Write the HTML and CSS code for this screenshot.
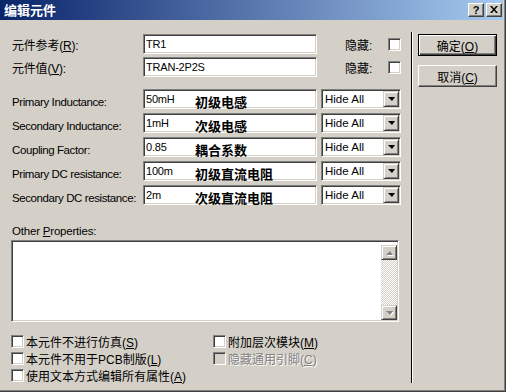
FILE: index.html
```html
<!DOCTYPE html>
<html>
<head>
<meta charset="utf-8">
<link rel="stylesheet" href="styles.css">
</head>
<body>
<div class="window">
  <div class="titlebar">
    <span class="title">编辑元件</span>
    <div class="tbtns">
      <span class="tbtn help">?</span>
      <span class="tbtn close"><svg width="8" height="7" viewBox="0 0 8 7"><path d="M0 0h2l2 2.5L6 0h2L5 3.5 8 7H6L4 4.5 2 7H0l3-3.5z" fill="#000"/></svg></span>
    </div>
  </div>
  <div class="content">
    <div class="left">
      <div class="toprows">
        <div class="row">
          <span class="lbl cjk">元件参考(<u>R</u>):</span>
          <div class="field"><span class="val">TR1</span></div>
          <span class="hide-lbl cjk">隐藏:</span>
          <span class="chk"></span>
        </div>
        <div class="row">
          <span class="lbl cjk">元件值(<u>V</u>):</span>
          <div class="field"><span class="val">TRAN-2P2S</span></div>
          <span class="hide-lbl cjk">隐藏:</span>
          <span class="chk"></span>
        </div>
      </div>
      <div class="props">
        <div class="row">
          <span class="lbl plbl">Primary Inductance:</span>
          <div class="field"><span class="val short">50mH</span><b class="note">初级电感</b></div>
          <div class="select"><span>Hide All</span><span class="dd"><i class="tri"></i></span></div>
        </div>
        <div class="row">
          <span class="lbl plbl">Secondary Inductance:</span>
          <div class="field"><span class="val short">1mH</span><b class="note">次级电感</b></div>
          <div class="select"><span>Hide All</span><span class="dd"><i class="tri"></i></span></div>
        </div>
        <div class="row">
          <span class="lbl plbl">Coupling Factor:</span>
          <div class="field"><span class="val short">0.85</span><b class="note">耦合系数</b></div>
          <div class="select"><span>Hide All</span><span class="dd"><i class="tri"></i></span></div>
        </div>
        <div class="row">
          <span class="lbl plbl">Primary DC resistance:</span>
          <div class="field"><span class="val short">100m</span><b class="note">初级直流电阻</b></div>
          <div class="select"><span>Hide All</span><span class="dd"><i class="tri"></i></span></div>
        </div>
        <div class="row">
          <span class="lbl plbl">Secondary DC resistance:</span>
          <div class="field"><span class="val short">2m</span><b class="note">次级直流电阻</b></div>
          <div class="select"><span>Hide All</span><span class="dd"><i class="tri"></i></span></div>
        </div>
      </div>
      <div class="other-lbl">Other <u>P</u>roperties:</div>
      <div class="memo">
        <div class="vscroll">
          <span class="sbtn"><i class="tri up"></i></span>
          <span class="track"></span>
          <span class="sbtn"><i class="tri dis"></i></span>
        </div>
      </div>
      <div class="checks">
        <div class="citem"><span class="chk"></span><span class="cjk">本元件不进行仿真(<u>S</u>)</span></div>
        <div class="citem"><span class="chk"></span><span class="cjk">附加层次模块(<u>M</u>)</span></div>
        <div class="citem"><span class="chk"></span><span class="cjk">本元件不用于PCB制版(<u>L</u>)</span></div>
        <div class="citem disabled"><span class="chk"></span><span class="cjk">隐藏通用引脚(<u>C</u>)</span></div>
        <div class="citem"><span class="chk"></span><span class="cjk">使用文本方式编辑所有属性(<u>A</u>)</span></div>
      </div>
    </div>
    <div class="sep"></div>
    <div class="right">
      <div class="btn default"><span>确定(<u>O</u>)</span></div>
      <div class="btn"><span>取消(<u>C</u>)</span></div>
    </div>
  </div>
</div>
</body>
</html>
```

FILE: styles.css
```css
* { box-sizing: border-box; }
html, body { margin: 0; padding: 0; }
body {
  width: 506px; height: 392px; overflow: hidden;
  background: #d4d0c8;
  font-family: "Liberation Sans", "Noto Sans CJK SC", sans-serif;
  font-size: 11px; color: #000;
}
u { text-decoration: underline; text-underline-offset: 1px; }
.cjk { font-size: 12px; letter-spacing: 0; }

.window {
  width: 506px; height: 392px;
  border-right: 1px solid #404040; border-bottom: 1px solid #404040;
  box-shadow: inset -1px -1px #808080;
  padding: 0 2px 2px 0;
  display: flex; flex-direction: column;
}
.titlebar {
  height: 20px; flex: none;
  background: linear-gradient(to right, #0a246a, #a6caf0);
  display: flex; align-items: center; justify-content: space-between;
  padding: 0 1px 0 4px;
}
.title { color: #fff; font: bold 13px "Noto Sans CJK SC", sans-serif; line-height: 20px; }
.tbtns { display: flex; gap: 2px; }
.tbtn {
  width: 16px; height: 14px; background: #d4d0c8;
  border-top: 1px solid #fff; border-left: 1px solid #fff;
  border-right: 1px solid #404040; border-bottom: 1px solid #404040;
  box-shadow: inset -1px -1px #808080;
  display: flex; align-items: center; justify-content: center;
}
.help { font: bold 11px "Liberation Sans", sans-serif; line-height: 12px; padding-bottom: 1px; }
.close svg { display: block; margin-bottom: 1px; }

.content { flex: 1; display: flex; }
.left { width: 411px; flex: none; padding: 14px 0 0 12px; }
.sep { width: 2px; flex: none; margin-top: 12px; height: 351px; border-left: 1px solid #000; border-right: 1px solid #fff; }
.right { padding: 14px 0 0 5px; display: flex; flex-direction: column; gap: 9px; }

.toprows { display: flex; flex-direction: column; gap: 3px; }
.row { display: flex; align-items: center; height: 20px; }
.lbl { width: 131px; flex: none; letter-spacing: -0.2px; }
.plbl { padding-top: 6px; font-size: 11.5px; letter-spacing: -0.4px; }
.field, .select, .memo {
  background: #fff;
  border-top: 1px solid #808080; border-left: 1px solid #808080;
  border-bottom: 1px solid #fff; border-right: 1px solid #fff;
  box-shadow: inset 1px 1px #404040, inset -1px -1px #d4d0c8;
}
.field {
  width: 174px; height: 20px; flex: none;
  display: flex; align-items: center; padding-left: 2px;
}
.val { letter-spacing: -0.2px; white-space: nowrap; }
.val.short { width: 49px; flex: none; }
.note { font: bold 13px "Noto Sans CJK SC", sans-serif; line-height: 14px; margin-top: 5px; white-space: nowrap; }
.hide-lbl { margin-left: 28px; width: 43px; flex: none; }
.chk {
  width: 13px; height: 13px; flex: none; background: #fff;
  border-top: 1px solid #808080; border-left: 1px solid #808080;
  border-bottom: 1px solid #fff; border-right: 1px solid #fff;
  box-shadow: inset 1px 1px #404040, inset -1px -1px #d4d0c8;
}

.props { margin-top: 12px; display: flex; flex-direction: column; gap: 4px; }
.select {
  margin-left: 4px; width: 80px; height: 20px; flex: none;
  display: flex; align-items: center; padding-left: 3px;
  font-size: 11.5px;
}
.dd {
  margin-left: auto; margin-right: 1px; width: 16px; height: 16px; flex: none;
  background: #d4d0c8;
  border-top: 1px solid #d4d0c8; border-left: 1px solid #d4d0c8;
  border-right: 1px solid #404040; border-bottom: 1px solid #404040;
  box-shadow: inset 1px 1px #fff, inset -1px -1px #808080;
  display: flex; align-items: center; justify-content: center;
}
.tri {
  display: block; width: 0; height: 0;
  border-left: 4px solid transparent; border-right: 3px solid transparent;
  border-top: 4px solid #000; margin-left: 1px;
}
.tri.up, .tri.dis { border-top-color: #808080; filter: drop-shadow(1px 1px 0 #fff); }
.tri.up { border-top: 0; border-bottom: 4px solid #808080; }

.other-lbl { margin-top: 19px; height: 14px; line-height: 14px; letter-spacing: -0.2px; font-size: 11.5px; }
.memo {
  margin-top: 2px; margin-left: -1px; width: 388px; height: 82px;
  display: flex; justify-content: flex-end; padding: 4px 1px 1px 0;
}
.vscroll { width: 16px; display: flex; flex-direction: column; }
.sbtn {
  height: 15px; flex: none; background: #d4d0c8;
  border-top: 1px solid #d4d0c8; border-left: 1px solid #d4d0c8;
  border-right: 1px solid #404040; border-bottom: 1px solid #404040;
  box-shadow: inset 1px 1px #fff, inset -1px -1px #808080;
  display: flex; align-items: center; justify-content: center;
}
.track { flex: 1; background: repeating-conic-gradient(#fff 0 25%, #d4d0c8 0 50%) 0 0 / 2px 2px; }

.checks { margin-top: 11px; margin-left: -1px; display: grid; grid-template-columns: 202px 1fr; }
.citem { height: 17px; display: flex; align-items: center; gap: 2px; white-space: nowrap; }
.citem.disabled { color: #808080; text-shadow: 1px 1px 0 #fff; }
.citem.disabled .chk { background: #d4d0c8; }

.btn {
  width: 79px; height: 22px;
  border-top: 1px solid #fff; border-left: 1px solid #fff;
  border-right: 1px solid #404040; border-bottom: 1px solid #404040;
  box-shadow: inset -1px -1px #808080;
  display: flex; align-items: center; justify-content: center;
  font-size: 12px;
}
.btn.default {
  border: 1px solid #000;
  box-shadow: inset 1px 1px #fff, inset -1px -1px #404040, inset -2px -2px #808080;
}
```
